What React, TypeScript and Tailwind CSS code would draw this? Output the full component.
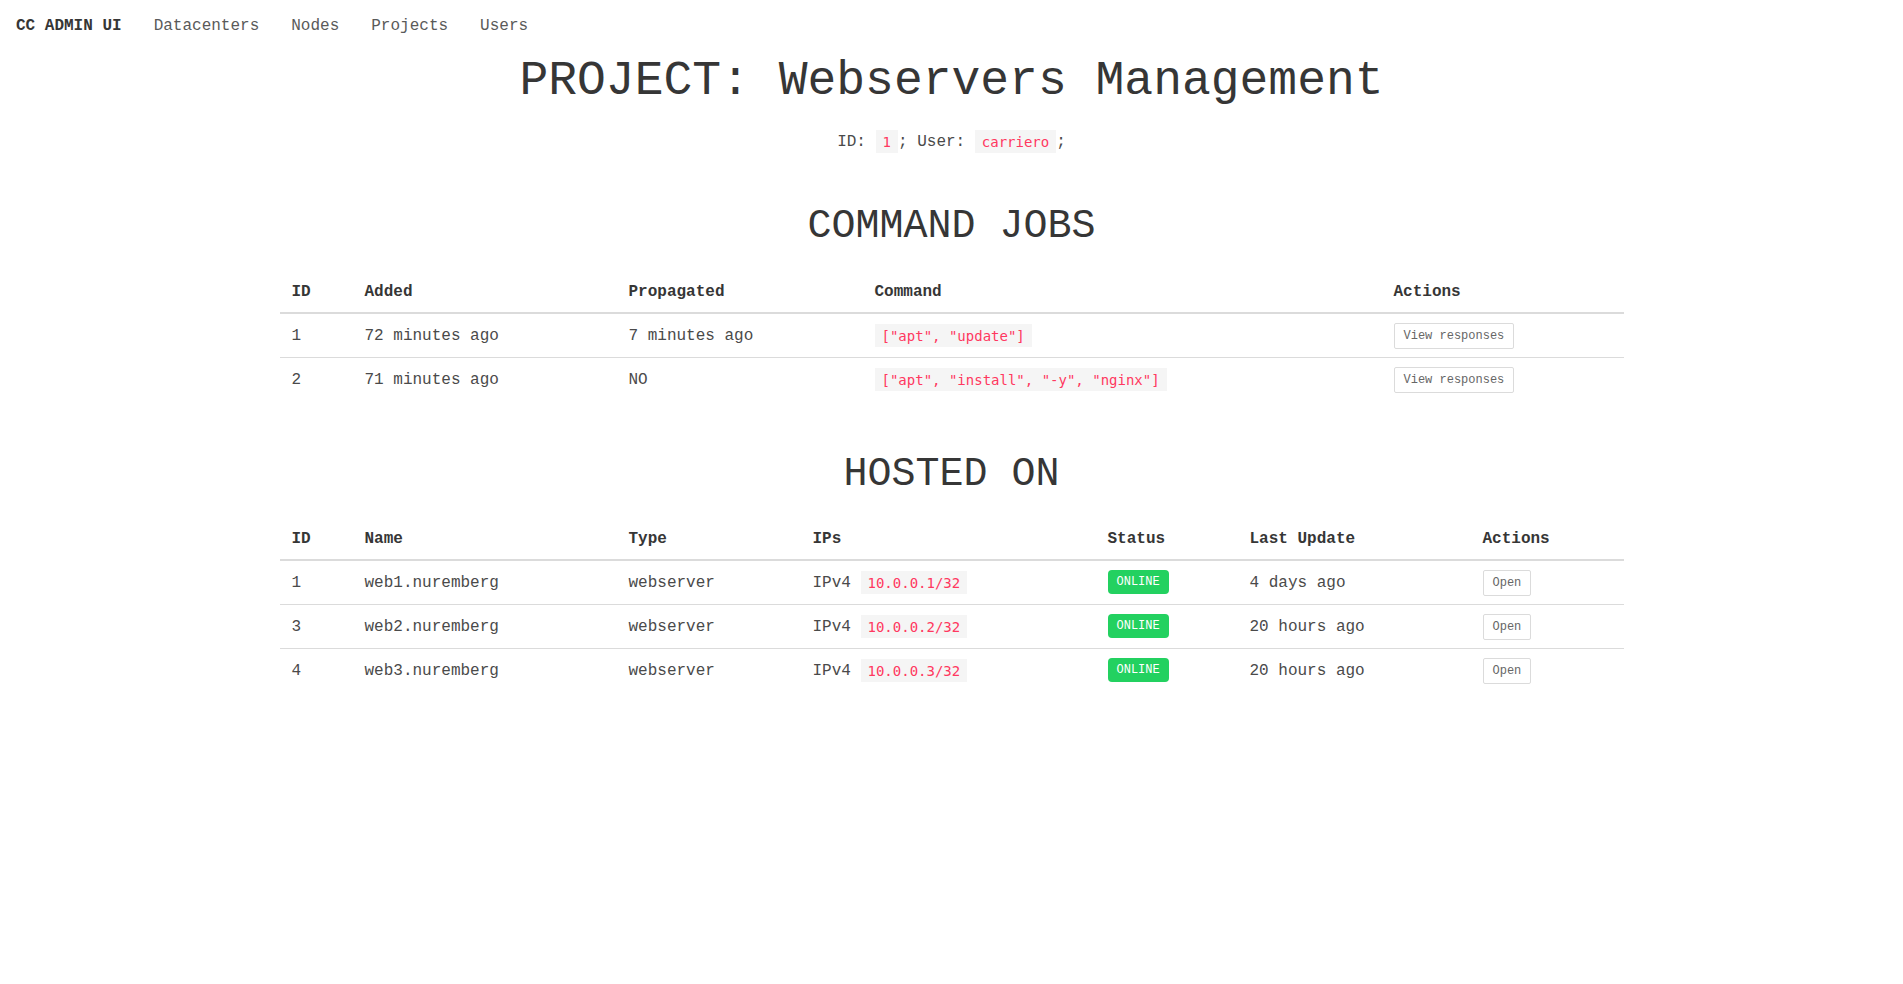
import React from 'react';

const mono = "font-[family-name:Liberation_Mono,monospace]";

const Code: React.FC<{ children: React.ReactNode }> = ({ children }) => (
  <code className="bg-[#f5f5f5] text-[#ff3860] text-[14px] px-[7px] py-[3.5px] font-[family-name:DejaVu_Sans_Mono,monospace]">
    {children}
  </code>
);

const SmallButton: React.FC<{ label: string }> = ({ label }) => (
  <button className="inline-flex items-center h-[26px] px-[9px] border border-[#dbdbdb] rounded-[2px] bg-white text-[12px] text-[#666] align-middle">
    {label}
  </button>
);

const OnlineTag: React.FC = () => (
  <span className="inline-flex items-center h-6 px-[9px] rounded-[4px] bg-[#23d160] text-white text-[12px] align-middle">
    ONLINE
  </span>
);

const jobs = [
  { id: 1, added: '72 minutes ago', propagated: '7 minutes ago', command: '["apt", "update"]' },
  { id: 2, added: '71 minutes ago', propagated: 'NO', command: '["apt", "install", "-y", "nginx"]' },
];

const nodes = [
  { id: 1, name: 'web1.nuremberg', ip: '10.0.0.1/32', last: '4 days ago' },
  { id: 3, name: 'web2.nuremberg', ip: '10.0.0.2/32', last: '20 hours ago' },
  { id: 4, name: 'web3.nuremberg', ip: '10.0.0.3/32', last: '20 hours ago' },
];

const th = 'text-left font-bold text-[#363636] px-3 py-2 border-b-2 border-[#dbdbdb]';
const td = 'px-3 py-[8.5px] align-middle';
const tr = 'border-b border-[#dbdbdb] last:border-b-0';

export default function App() {
  return (
    <div className={`${mono} min-h-screen bg-white text-[16px] leading-6 text-[#4a4a4a]`}>
      {/* Navbar */}
      <nav className="h-[52px] flex items-center">
        <a className="px-4 font-bold text-[#363636]">CC ADMIN UI</a>
        <a className="px-4 text-[#5a5a5a]">Datacenters</a>
        <a className="px-4 text-[#5a5a5a]">Nodes</a>
        <a className="px-4 text-[#5a5a5a]">Projects</a>
        <a className="px-4 text-[#5a5a5a]">Users</a>
      </nav>

      <div className="max-w-[1344px] mx-auto">
        <h1 className="text-center text-[48px] leading-[1.125] text-[#363636] mt-[2px]">PROJECT: Webservers Management</h1>
        <p className="text-center mt-[21px]">
          ID: <Code>1</Code>; User: <Code>carriero</Code>;
        </p>

        <h2 className="text-center text-[40px] leading-[1.125] text-[#363636] mt-[50px] mb-[23px]">COMMAND JOBS</h2>
        <table className="w-full table-fixed border-collapse">
          <thead>
            <tr>
              <th className={`${th} w-[73px]`}>ID</th>
              <th className={`${th} w-[264px]`}>Added</th>
              <th className={`${th} w-[246px]`}>Propagated</th>
              <th className={`${th} w-[519px]`}>Command</th>
              <th className={`${th} w-[242px]`}>Actions</th>
            </tr>
          </thead>
          <tbody>
            {jobs.map(j => (
              <tr key={j.id} className={tr}>
                <td className={td}>{j.id}</td>
                <td className={td}>{j.added}</td>
                <td className={td}>{j.propagated}</td>
                <td className={td}><Code>{j.command}</Code></td>
                <td className={td}><SmallButton label="View responses" /></td>
              </tr>
            ))}
          </tbody>
        </table>

        <h2 className="text-center text-[40px] leading-[1.125] text-[#363636] mt-[51px] mb-[22px]">HOSTED ON</h2>
        <table className="w-full table-fixed border-collapse">
          <thead>
            <tr>
              <th className={`${th} w-[73px]`}>ID</th>
              <th className={`${th} w-[264px]`}>Name</th>
              <th className={`${th} w-[184px]`}>Type</th>
              <th className={`${th} w-[295px]`}>IPs</th>
              <th className={`${th} w-[142px]`}>Status</th>
              <th className={`${th} w-[233px]`}>Last Update</th>
              <th className={`${th} w-[153px]`}>Actions</th>
            </tr>
          </thead>
          <tbody>
            {nodes.map(n => (
              <tr key={n.id} className={tr}>
                <td className={td}>{n.id}</td>
                <td className={td}>{n.name}</td>
                <td className={td}>webserver</td>
                <td className={td}>IPv4 <Code>{n.ip}</Code></td>
                <td className={td}><OnlineTag /></td>
                <td className={td}>{n.last}</td>
                <td className={td}><SmallButton label="Open" /></td>
              </tr>
            ))}
          </tbody>
        </table>
      </div>
    </div>
  );
}
